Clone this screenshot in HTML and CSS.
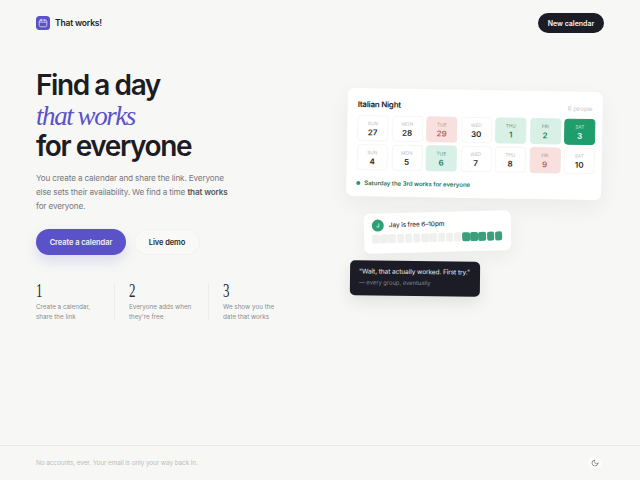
FILE: index.html
```html
<!DOCTYPE html>
<html lang="en">
<head>
    <meta charset="UTF-8">
    <meta name="viewport" content="width=device-width, initial-scale=1.0">
    <title>That works!</title>
    <link rel="stylesheet" href="styles.css">
</head>
<body>

    <header class="topbar">
        <div class="brand">
            <span class="brand-icon">
                <svg viewBox="0 0 24 24" width="10" height="10" fill="none" stroke="#d9d6f7" stroke-width="2" stroke-linecap="round">
                    <rect x="3" y="5" width="18" height="16" rx="3"/>
                    <path d="M3 10h18M8 3v4M16 3v4"/>
                </svg>
            </span>
            <span class="brand-name">That works!</span>
        </div>
        <button class="new-btn">New calendar</button>
    </header>

    <main class="hero">
        <section class="intro">
            <h1>Find a day<br><em>that works</em><br>for everyone</h1>
            <p class="lead">You create a calendar and share the link. Everyone else sets their availability. We find a time <strong>that works</strong> for everyone.</p>
            <div class="actions">
                <button class="primary">Create a calendar</button>
                <button class="ghost">Live demo</button>
            </div>
            <div class="steps">
                <div class="step">
                    <span class="num">1</span>
                    <p>Create a calendar,<br>share the link</p>
                </div>
                <div class="step">
                    <span class="num">2</span>
                    <p>Everyone adds when<br>they're free</p>
                </div>
                <div class="step">
                    <span class="num">3</span>
                    <p>We show you the<br>date that works</p>
                </div>
            </div>
        </section>

        <section class="preview">
            <div class="cal-card">
                <div class="cal-head">
                    <h3>Italian Night</h3>
                    <span>6 people</span>
                </div>
                <div class="cal-grid">
                    <div class="cell"><small>SUN</small><b>27</b></div>
                    <div class="cell"><small>MON</small><b>28</b></div>
                    <div class="cell busy"><small>TUE</small><b>29</b></div>
                    <div class="cell"><small>WED</small><b>30</b></div>
                    <div class="cell free"><small>THU</small><b>1</b></div>
                    <div class="cell free"><small>FRI</small><b>2</b></div>
                    <div class="cell best"><small>SAT</small><b>3</b></div>
                    <div class="cell"><small>SUN</small><b>4</b></div>
                    <div class="cell"><small>MON</small><b>5</b></div>
                    <div class="cell free"><small>TUE</small><b>6</b></div>
                    <div class="cell"><small>WED</small><b>7</b></div>
                    <div class="cell"><small>THU</small><b>8</b></div>
                    <div class="cell busy"><small>FRI</small><b>9</b></div>
                    <div class="cell"><small>SAT</small><b>10</b></div>
                </div>
                <div class="cal-result"><i></i>Saturday the 3rd works for everyone</div>
            </div>

            <div class="jay-card">
                <div class="jay-row">
                    <span class="avatar">J</span>
                    <span>Jay is free 6–10pm</span>
                </div>
                <div class="slots">
                    <i></i><i></i><i></i><i></i><i></i><i></i><i></i><i></i><i></i><i></i><i></i>
                    <i class="on"></i><i class="on"></i><i class="on"></i><i class="on"></i><i class="on"></i>
                </div>
            </div>

            <div class="quote-card">
                <p>"Wait, that actually worked. First try."</p>
                <span>— every group, eventually</span>
            </div>
        </section>
    </main>

    <footer class="bottom">
        <span>No accounts, ever. Your email is only your way back in.</span>
        <button class="theme">
            <svg viewBox="0 0 24 24" width="8" height="8" fill="none" stroke="#6a6a70" stroke-width="2" stroke-linecap="round" stroke-linejoin="round">
                <path d="M21 12.8A9 9 0 1 1 11.2 3a7 7 0 0 0 9.8 9.8z"/>
            </svg>
        </button>
    </footer>

</body>
</html>
```

FILE: styles.css
```css
* {
    margin: 0;
    padding: 0;
    box-sizing: border-box;
    font-family: 'Inter', sans-serif;
}

body {
    background: #f7f8f5;
    color: #1c1c22;
    min-height: 480px;
    display: flex;
    flex-direction: column;
}

button {
    border: 0;
    outline: 0;
    cursor: pointer;
}

/* top bar */
.topbar {
    display: flex;
    align-items: center;
    justify-content: space-between;
    padding: 13px 36px 0;
    height: 33px;
}

.brand {
    display: flex;
    align-items: center;
    gap: 5px;
}

.brand-icon {
    width: 14px;
    height: 14px;
    border-radius: 3.5px;
    background: #5b52c9;
    display: flex;
    align-items: center;
    justify-content: center;
}

.brand-name {
    font-size: 8.5px;
    font-weight: 600;
    letter-spacing: -0.02em;
}

.new-btn {
    height: 20px;
    width: 66px;
    border-radius: 10px;
    background: #1c1c26;
    color: #f4f4f2;
    font-size: 7px;
    font-weight: 600;
}

/* hero */
.hero {
    flex: 1;
    display: grid;
    grid-template-columns: 311px 1fr;
    padding: 0 36px;
}

.intro {
    padding-top: 37px;
}

h1 {
    font-size: 28px;
    line-height: 30px;
    font-weight: 600;
    letter-spacing: -0.051em;
}

h1 em {
    font-family: 'Liberation Serif', serif;
    font-size: 27px;
    font-weight: 400;
    font-style: italic;
    color: #5b52c9;
    letter-spacing: -0.053em;
}

.lead {
    margin-top: 11px;
    width: 197px;
    font-size: 8.2px;
    line-height: 13.8px;
    letter-spacing: -0.02em;
    color: #77777c;
}

.lead strong {
    color: #55555a;
    font-weight: 600;
}

.actions {
    display: flex;
    gap: 8px;
    margin-top: 16px;
}

.actions button {
    height: 26px;
    border-radius: 13px;
    font-size: 7.5px;
    font-weight: 600;
    letter-spacing: -0.01em;
}

.primary {
    width: 90px;
    background: #5b52c9;
    color: #f1f0fb;
    box-shadow: 0 6px 14px rgba(91, 82, 201, 0.18);
}

.ghost {
    width: 66px;
    background: #f9f9f7;
    color: #2a2a30;
    border: 1px solid #f2f2ef;
}

.steps {
    display: flex;
    margin-top: 28px;
}

.step {
    width: 94px;
    height: 37px;
    padding-left: 14px;
    border-right: 1px solid #ededea;
}

.step:first-child {
    width: 79px;
    padding-left: 0;
}

.step:last-child {
    border-right: 0;
}

.num {
    display: block;
    font-family: 'Liberation Serif', serif;
    font-size: 18px;
    line-height: 17px;
    color: #2a2a30;
    transform: scaleX(0.72);
    transform-origin: left center;
}

.step p {
    margin-top: 2px;
    font-size: 6.3px;
    line-height: 10px;
    white-space: nowrap;
    color: #8b8b90;
}

/* right side cards */
.preview {
    padding-top: 57px;
}

.cal-card {
    width: 255px;
    height: 108px;
    background: #fff;
    border-radius: 7px;
    padding: 9px 10px 0;
    transform: rotate(1deg);
    box-shadow: 0 8px 22px rgba(30, 30, 40, 0.06);
}

.cal-head {
    display: flex;
    justify-content: space-between;
    align-items: center;
    height: 14px;
}

.cal-head h3 {
    font-size: 8px;
    font-weight: 600;
    letter-spacing: -0.03em;
}

.cal-head span {
    font-size: 6px;
    color: #c6c6c4;
}

.cal-grid {
    display: grid;
    grid-template-columns: repeat(7, 31px);
    grid-auto-rows: 26px;
    gap: 3px 3.5px;
    margin-top: 4px;
}

.cell {
    display: flex;
    flex-direction: column;
    align-items: center;
    justify-content: center;
    gap: 1px;
    border-radius: 4px;
    background: #fff;
    border: 1px solid #f6f6f3;
}

.cell small {
    font-size: 4.8px;
    color: #bdbdbd;
}

.cell b {
    font-size: 8px;
    font-weight: 600;
    color: #26262c;
}

.cell.busy {
    background: #f8e0de;
    border-color: #f8e0de;
}

.cell.busy small {
    color: #b99a98;
}

.cell.busy b {
    color: #b5605c;
}

.cell.free {
    background: #d8f0e5;
    border-color: #d8f0e5;
}

.cell.free small {
    color: #6d9d88;
}

.cell.free b {
    color: #1f7d58;
}

.cell.best {
    background: #1f9d6b;
    border-color: #1f9d6b;
}

.cell.best small {
    color: #bfe8d6;
}

.cell.best b {
    color: #fff;
}

.cal-result {
    display: flex;
    align-items: center;
    gap: 4px;
    margin-top: 9px;
    font-size: 6px;
    font-weight: 600;
    color: #1f6f50;
}

.cal-result i {
    width: 4px;
    height: 4px;
    border-radius: 50%;
    background: #1f9d6b;
}

.jay-card {
    width: 147px;
    height: 40px;
    margin: 14px 0 0 17px;
    padding: 6px 8px;
    background: #fff;
    border-radius: 6px;
    transform: rotate(-1.5deg);
    box-shadow: 0 6px 18px rgba(30, 30, 40, 0.06);
}

.jay-row {
    display: flex;
    align-items: center;
    gap: 5px;
    font-size: 6.5px;
    font-weight: 500;
    letter-spacing: -0.02em;
    color: #3a3a40;
}

.avatar {
    width: 12px;
    height: 12px;
    border-radius: 50%;
    background: #2f9f74;
    color: #fff;
    font-size: 5.5px;
    display: flex;
    align-items: center;
    justify-content: center;
}

.slots {
    display: flex;
    gap: 0.7px;
    margin-top: 3px;
}

.slots i {
    width: 7.5px;
    height: 9px;
    border-radius: 2px;
    background: #f0f0ee;
}

.slots i.on {
    background: #3a9f7a;
}

.quote-card {
    width: 130px;
    height: 35px;
    margin: 9px 0 0 3px;
    padding: 7px 9px;
    background: #1c1c26;
    border-radius: 5px;
    transform: rotate(0.6deg);
    box-shadow: 0 6px 16px rgba(30, 30, 40, 0.1);
}

.quote-card p {
    font-size: 6.5px;
    letter-spacing: -0.01em;
    color: #ececea;
    white-space: nowrap;
}

.quote-card span {
    display: block;
    margin-top: 3px;
    font-size: 5.8px;
    color: #85858c;
}

/* footer */
.bottom {
    height: 35px;
    border-top: 1px solid #e9e9e5;
    padding: 0 38px 0 36px;
    display: flex;
    align-items: center;
    justify-content: space-between;
    font-size: 6.5px;
    letter-spacing: -0.02em;
    color: #bdbdbb;
}

.theme {
    width: 14px;
    height: 14px;
    border-radius: 50%;
    background: #fcfcfb;
    display: flex;
    align-items: center;
    justify-content: center;
}
```
